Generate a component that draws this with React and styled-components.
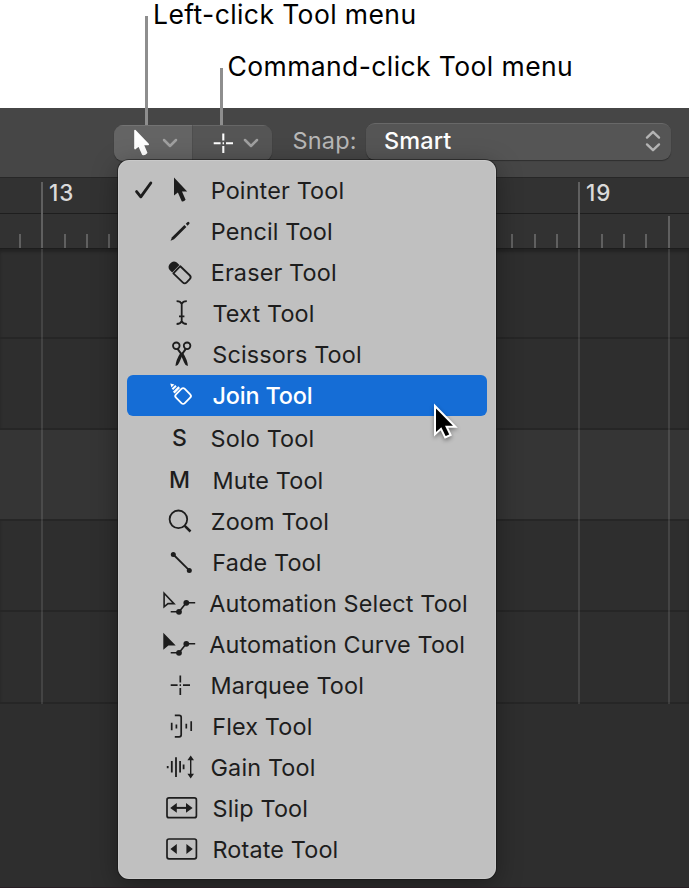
import { Fragment } from "react";
import styled, { createGlobalStyle, css } from "styled-components";

const INK = "#1d1d1d";

const PointerShape = () => (
  <path d="M12 5.6V23.6L15.9 20.6L19.7 29.2Q21.6 30 23.6 27.8L20 19.4H25.2Z" fill="currentColor" />
);

const Crosshair = () => (
  <path d="M8.7 18.2H15.6M21 18.2H28M18.3 8.6V15.4M18.3 21V28M17.6 18.2H19" />
);

const AutomationNodes = () => (
  <>
    <path d="M8.7 26.8H17L24.3 17.8H33.2" strokeWidth="1.6" />
    <circle cx="17" cy="26.8" r="2.9" fill="currentColor" stroke="none" />
    <circle cx="24.3" cy="17.8" r="2.9" fill="currentColor" stroke="none" />
  </>
);

const icons = {
  pointer: <g stroke="none"><PointerShape /></g>,
  pencil: (
    <>
      <path d="M8.6 27.8L10 24.2L22.4 11.9L24.4 13.9L12.1 26.3Z" fill="currentColor" stroke="none" />
      <path d="M23.8 10.8L25.3 9.3Q26.3 8.4 27.2 9.3Q28 10.2 27.2 11.1L25.6 12.7Z" fill="currentColor" stroke="none" />
    </>
  ),
  eraser: (
    <g transform="translate(-0.8 0.2) rotate(44 18.3 18.2)">
      <path d="M13.2 13V23.4H9.6Q5.4 22.6 5.4 18.2Q5.4 13.8 9.6 13Z" fill="currentColor" stroke="none" />
      <path d="M14.6 13.2H27.6Q30.4 13.2 30.4 16V20.4Q30.4 23.2 27.6 23.2H14.6Z" strokeWidth="1.8" />
    </g>
  ),
  text: (
    <path d="M14.6 6.2Q18.6 6.2 19.7 9Q20.8 6.2 24.8 6.2M19.7 9V26.2M14.6 29Q18.6 29 19.7 26.2Q20.8 29 24.8 29M17 21.3H22.4" strokeWidth="1.8" />
  ),
  scissors: (
    <>
      <circle cx="14.3" cy="9.8" r="3.3" strokeWidth="1.8" />
      <circle cx="25.1" cy="9.8" r="3.3" strokeWidth="1.8" />
      <path d="M15.6 12.9L20 19M23.8 12.9L19.4 19" strokeWidth="2" />
      <path d="M18.2 17.4L20.8 16.4Q25.8 24.4 25.9 30Q23 29.6 22.1 26.6Z" fill="currentColor" stroke="none" />
      <path d="M21.2 17.4L18.6 16.4Q13.6 24.4 13.5 30Q16.4 29.6 17.3 26.6Z" fill="currentColor" stroke="none" />
    </>
  ),
  join: (
    <>
      <rect x="14.9" y="12.8" width="12.4" height="12.4" rx="2.4" transform="rotate(45 21.1 19)" strokeWidth="1.8" />
      <path d="M8.3 6.6L12.4 7.6L9.4 10.6Z" fill="currentColor" stroke="none" />
      <path d="M10.4 12.3L14 8.7" strokeWidth="2" />
      <path d="M11.8 15.6L17.2 10.2" strokeWidth="2.4" />
    </>
  ),
  zoom: (
    <>
      <circle cx="16.4" cy="16.3" r="8.8" strokeWidth="1.8" />
      <path d="M22.8 22.8L28.5 28.5" strokeWidth="2.5" />
    </>
  ),
  fade: (
    <>
      <path d="M11.3 10.5L27.3 26.4" strokeWidth="1.8" />
      <circle cx="11.3" cy="10.6" r="2.5" fill="currentColor" stroke="none" />
      <circle cx="27.3" cy="26.4" r="2.5" fill="currentColor" stroke="none" />
    </>
  ),
  automationSelect: (
    <>
      <path d="M2.1 8.3V21.8L6 18.6H12Z" strokeWidth="1.6" strokeLinejoin="miter" />
      <AutomationNodes />
    </>
  ),
  automationCurve: (
    <>
      <path d="M1.3 6.8V23.7L6.4 19.6H13.7Z" fill="currentColor" stroke="none" />
      <AutomationNodes />
    </>
  ),
  marquee: <g strokeWidth="1.7"><Crosshair /></g>,
  flex: (
    <>
      <path d="M12.8 7.4H17.2Q19.2 7.4 19.2 9.4V26.8Q19.2 28.8 17.2 28.8H12.8" strokeWidth="1.7" />
      <path d="M9.7 14.8V22.2M14.4 16.5V20.4M24.3 15.8V20.6M29.2 13.2V23" strokeWidth="1.7" />
    </>
  ),
  gain: (
    <>
      <path d="M5.7 17V19.2M9.8 12V23.6M14 8.2V28M18.1 12V23.6M21.6 15.6V20.2" strokeWidth="1.8" />
      <path d="M28.7 9V27" strokeWidth="1.4" />
      <path d="M28.7 6.4L32 11.2H25.4ZM28.7 29.6L32 24.8H25.4Z" fill="currentColor" stroke="none" />
    </>
  ),
  slip: (
    <>
      <rect x="5" y="7.9" width="29.4" height="19.8" rx="2" strokeWidth="1.7" />
      <path d="M12 17.9H27" strokeWidth="2" />
      <path d="M8.2 17.9L14.8 13V22.8ZM30.6 17.9L24 13V22.8Z" fill="currentColor" stroke="none" />
    </>
  ),
  rotate: (
    <>
      <rect x="5" y="8" width="29.4" height="19.8" rx="2" strokeWidth="1.7" />
      <path d="M8.4 18L14.8 13V23ZM30.8 18L24.4 13V23Z" fill="currentColor" stroke="none" />
    </>
  ),
};

// gap = space between the icon slot and the label
const tools = [
  { name: "Pointer Tool", icon: "pointer", gap: 12.7, checked: true },
  { name: "Pencil Tool", icon: "pencil", gap: 12.7 },
  { name: "Eraser Tool", icon: "eraser", gap: 12.7 },
  { name: "Text Tool", icon: "text", gap: 14.4 },
  { name: "Scissors Tool", icon: "scissors", gap: 14.3 },
  { name: "Join Tool", icon: "join", gap: 14.4, selected: true },
  { name: "Solo Tool", letter: "S", gap: 12.6, space: 2 },
  { name: "Mute Tool", letter: "M", gap: 14.5, space: 1 },
  { name: "Zoom Tool", icon: "zoom", gap: 12.8 },
  { name: "Fade Tool", icon: "fade", gap: 14.3 },
  { name: "Automation Select Tool", icon: "automationSelect", gap: 11.2 },
  { name: "Automation Curve Tool", icon: "automationCurve", gap: 11.2 },
  { name: "Marquee Tool", icon: "marquee", gap: 12.5 },
  { name: "Flex Tool", icon: "flex", gap: 14.2 },
  { name: "Gain Tool", icon: "gain", gap: 12.5 },
  { name: "Slip Tool", icon: "slip", gap: 14.5 },
  { name: "Rotate Tool", icon: "rotate", gap: 14.5 },
];

const beats = Array.from({ length: 30 }, (_, i) => i);

const Chevron = () => (
  <ChevronSvg viewBox="0 0 16 10">
    <path d="M2 2L8 8L14 2" />
  </ChevronSvg>
);

const ToolMenu = () => (
  <Menu>
    {tools.map((tool) => (
      <MenuItem key={tool.name} $selected={tool.selected} $space={tool.space}>
        <CheckSlot>
          {tool.checked && (
            <CheckSvg viewBox="0 0 20 20">
              <path d="M2.6 11.6L6.8 16.8L16.8 3" />
            </CheckSvg>
          )}
        </CheckSlot>
        {tool.letter ? (
          <Letter>{tool.letter}</Letter>
        ) : (
          <IconSvg viewBox="0 0 36 36">{icons[tool.icon]}</IconSvg>
        )}
        <ItemLabel $gap={tool.gap} $selected={tool.selected}>{tool.name}</ItemLabel>
      </MenuItem>
    ))}
    <MouseCursor viewBox="0 0 34 40">
      <path d="M5 4V32.2L11 26.8L15.2 35.4L20.6 33L16.6 24.8H25.4Z" />
    </MouseCursor>
  </Menu>
);

const App = () => (
  <Fragment>
    <GlobalStyle />
    <Page>
      <Captions>
        <Caption $indent={153}>Left-click Tool menu</Caption>
        <Caption $indent={227.5}>Command-click Tool menu</Caption>
        <Leader $left={145.4} $top={16} />
        <Leader $left={220.4} $top={68} />
      </Captions>
      <Window>
        <Toolbar>
          <ToolButtons>
            <ToolButton $active>
              <IconSvg viewBox="0 0 36 36"><PointerShape /></IconSvg>
              <Chevron />
            </ToolButton>
            <ToolButton>
              <IconSvg viewBox="0 0 36 36"><g strokeWidth="2.1"><Crosshair /></g></IconSvg>
              <Chevron />
            </ToolButton>
          </ToolButtons>
          <SnapLabel>Snap:</SnapLabel>
          <SnapSelect>
            Smart
            <UpDownSvg viewBox="0 0 18 24">
              <path d="M3 8.6L9 2.8L15 8.6M3 15.4L9 21.2L15 15.4" />
            </UpDownSvg>
          </SnapSelect>
        </Toolbar>
        <BarStrip>
          <Bar>13</Bar>
          <Bar>19</Bar>
        </BarStrip>
        <BeatStrip>
          {beats.map((b) => (
            <Beat key={b} $height={b === 1 || b === 25 ? 35 : b === 29 ? 32 : 14} />
          ))}
        </BeatStrip>
        <Tracks>
          <Track $height={90} />
          <Track $height={91} />
          <Track $height={91} $light />
          <Track $height={91} />
          <Track $height={92} />
          <GridLines>
            <GridLine $width={537} />
            <GridLine $width={90} />
            <GridLine $width={20} />
          </GridLines>
        </Tracks>
        <ToolMenu />
      </Window>
    </Page>
  </Fragment>
);

export default App;

const GlobalStyle = createGlobalStyle`
  * {
    box-sizing: border-box;
  }
  body {
    margin: 0;
    background: #fff;
    font-family: Inter, "Liberation Sans", sans-serif;
    overflow: hidden;
  }
`;

const Page = styled.div`
  width: 690px;
  height: 888px;
  background: #fff;
`;

const Captions = styled.header`
  position: relative;
  z-index: 2;
  height: 108px;
  display: flex;
  flex-direction: column;
  color: #000;
`;

const Caption = styled.div`
  height: 52px;
  line-height: 28px;
  padding-left: ${({ $indent }) => $indent}px;
  font-size: 26.5px;
  letter-spacing: 0.4px;
  white-space: nowrap;
`;

const Leader = styled.span`
  position: absolute;
  left: ${({ $left }) => $left}px;
  top: ${({ $top }) => $top}px;
  width: 3px;
  height: ${({ $top }) => 125 - $top}px;
  background: #8e8e8e;
`;

const Window = styled.main`
  position: relative;
  width: 689px;
  height: 780px;
  background: #2e2e2e;
  border-bottom: 1px solid #291f25;
  overflow: hidden;
`;

const Toolbar = styled.div`
  height: 70px;
  display: flex;
  align-items: flex-start;
  padding-left: 114px;
  background: #464646;
  border-bottom: 1px solid #272727;
`;

const ToolButtons = styled.div`
  display: flex;
  width: 158px;
  height: 36px;
  margin-top: 17px;
  border-radius: 9px;
  overflow: hidden;
  box-shadow: 0 1px 1px rgba(0, 0, 0, 0.35);
`;

const ToolButton = styled.div`
  display: flex;
  align-items: center;
  width: ${({ $active }) => ($active ? 78 : 80)}px;
  padding-left: ${({ $active }) => ($active ? 9 : 11.5)}px;
  padding-bottom: 2px;
  color: #fff;
  background: ${({ $active }) => ($active ? "#646464" : "#555")};
  border-top: 1px solid ${({ $active }) => ($active ? "#737373" : "#666")};
  ${({ $active }) =>
    !$active &&
    css`
      border-left: 1px solid #4e4e4e;
    `}
`;

const ChevronSvg = styled.svg`
  width: 16px;
  height: 10px;
  margin: 1px 0 0 2.6px;
  fill: none;
  stroke: #a0a0a0;
  stroke-width: 2.5;
  stroke-linecap: round;
  stroke-linejoin: round;
`;

const SnapLabel = styled.span`
  margin: 18px 0 0 20.5px;
  width: 73.5px;
  line-height: 30px;
  font-size: 23.5px;
  letter-spacing: 0.2px;
  color: #b8b8b8;
`;

const SnapSelect = styled.div`
  display: flex;
  align-items: center;
  justify-content: space-between;
  width: 305px;
  height: 37px;
  margin-top: 15px;
  padding: 0 9px 4px 18px;
  font-size: 23.5px;
  font-weight: 500;
  letter-spacing: 0.1px;
  color: #fff;
  background: #555;
  border-top: 1px solid #686868;
  border-radius: 9px;
  box-shadow: 0 1px 1px rgba(0, 0, 0, 0.35);
`;

const UpDownSvg = styled.svg`
  width: 18px;
  height: 24px;
  margin-top: 2px;
  fill: none;
  stroke: #b4b4b4;
  stroke-width: 2.4;
  stroke-linecap: round;
  stroke-linejoin: round;
`;

const BarStrip = styled.div`
  display: flex;
  height: 36px;
  padding: 4px 0 0 41px;
  background: #323232;
  border-bottom: 1px solid #1e1e1e;
`;

const Bar = styled.div`
  flex: 0 0 537px;
  padding-left: 6px;
  line-height: 22px;
  font-size: 22.5px;
  font-weight: 500;
  letter-spacing: 0.8px;
  color: #dadada;
  border-left: 2px solid #606060;
`;

const BeatStrip = styled.div`
  display: flex;
  align-items: flex-end;
  height: 35px;
  padding-left: 18.9px;
  background: #323232;
  border-bottom: 1px solid #1d1d1d;
`;

const Beat = styled.span`
  flex: 0 0 22.375px;
  height: ${({ $height }) => $height}px;
  border-left: 2px solid #606060;
`;

const Tracks = styled.div`
  position: relative;
  display: flex;
  flex-direction: column;
  box-shadow: inset 0 3px 3px rgba(0, 0, 0, 0.25);
`;

const Track = styled.div`
  height: ${({ $height }) => $height}px;
  background: ${({ $light }) => ($light ? "#353535" : "transparent")};
  border-bottom: 2px solid #262626;
`;

const GridLines = styled.div`
  position: absolute;
  inset: 0;
  display: flex;
  padding-left: 41px;
`;

const GridLine = styled.span`
  flex: 0 0 ${({ $width }) => $width}px;
  border-left: 2px solid rgba(255, 255, 255, 0.11);
`;

const Menu = styled.div`
  position: absolute;
  left: 118px;
  top: 52px;
  width: 378px;
  height: 719px;
  padding: 9.5px 9px 0;
  background: #c0c0c0;
  border-radius: 11px;
  box-shadow: inset 0 0 0 1px rgba(255, 255, 255, 0.15), 0 0 0 1px rgba(20, 20, 20, 0.55),
    0 6px 26px rgba(0, 0, 0, 0.35);
`;

const MenuItem = styled.div`
  display: flex;
  align-items: center;
  height: 41px;
  margin-top: ${({ $space }) => $space || 0}px;
  border-radius: 6px;
  color: ${({ $selected }) => ($selected ? "#fff" : INK)};
  background: ${({ $selected }) => ($selected ? "#156dd6" : "transparent")};
`;

const CheckSlot = styled.span`
  flex: 0 0 35px;
  display: flex;
  padding-left: 7px;
`;

const CheckSvg = styled.svg`
  width: 20px;
  height: 20px;
  fill: none;
  stroke: currentColor;
  stroke-width: 2.9;
  stroke-linecap: round;
  stroke-linejoin: round;
`;

const IconSvg = styled.svg`
  flex: 0 0 36px;
  height: 36px;
  fill: none;
  stroke: currentColor;
  stroke-width: 1.6;
  stroke-linejoin: round;
`;

const Letter = styled.span`
  flex: 0 0 36px;
  padding-right: 1px;
  text-align: center;
  font-size: 23px;
  font-weight: 500;
`;

const ItemLabel = styled.span`
  margin-left: ${({ $gap }) => $gap}px;
  font-size: 23.4px;
  font-weight: ${({ $selected }) => ($selected ? 500 : 400)};
  letter-spacing: ${({ $selected }) => ($selected ? -0.15 : 0.15)}px;
  white-space: nowrap;
`;

const MouseCursor = styled.svg`
  position: absolute;
  left: 312px;
  top: 242px;
  width: 34px;
  height: 40px;
  fill: #000;
  stroke: #fff;
  stroke-width: 2;
  filter: drop-shadow(0 2px 2px rgba(0, 0, 0, 0.4));
`;
